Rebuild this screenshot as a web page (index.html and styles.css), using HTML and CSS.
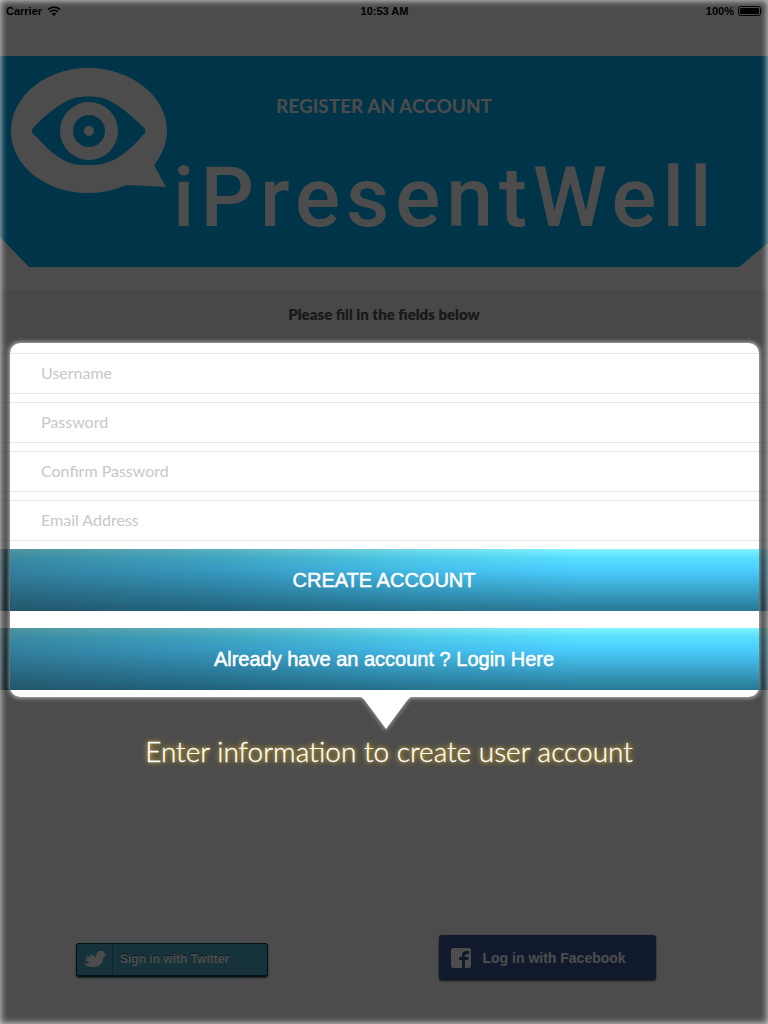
FILE: index.html
```html
<!DOCTYPE html>
<html lang="en">
<head>
<meta charset="utf-8">
<meta name="viewport" content="width=device-width, initial-scale=1">
<title>iPresentWell – Register an account</title>
<link rel="stylesheet" href="styles.css">
</head>
<body>
<div class="page">
  <div class="status">
    <div class="status-left">
      <span>Carrier</span>
      <svg class="wifi" viewBox="0 0 14 10" aria-hidden="true">
        <path d="M1 3.600C4.400.2 9.600.2 13 3.600M3.200 5.900C5.400 3.700 8.600 3.700 10.800 5.900" fill="none" stroke="#000" stroke-width="1.700"/>
        <path d="M7 10 4.700 7.700C6 6.500 8 6.500 9.300 7.700Z"/>
      </svg>
    </div>
    <span>10:53 AM</span>
    <div class="status-right">
      <span>100%</span>
      <svg class="battery" viewBox="0 0 25 10" aria-hidden="true">
        <rect x=".5" y=".5" width="22" height="9" rx="2" fill="none" stroke="#000"/>
        <rect x="2" y="2" width="19" height="6" rx="1"/>
        <path d="M23.500 3.200Q25 5 23.500 6.800Z"/>
      </svg>
    </div>
  </div>

  <header class="banner">
    <h1 class="title">REGISTER AN ACCOUNT</h1>
    <svg class="eye" viewBox="0 0 158 128" role="img" aria-label="Eye in a speech bubble">
      <path fill="#fff" fill-rule="evenodd" d="M78 1C36 1 1 29 1 64s35 62 77 62c14 0 27-3 38-8l40 2-12-22c8-10 13-22 13-34C157 29 121 1 78 1ZM23 61C36 47 50 36 64 31c9-2 20-2 29 0 14 5 27 16 40 29 3 1 3 6 0 8C121 82 109 92 96 96c-10 3-26 3-36 0C47 91 36 81 26 69c-4-1-5-5-3-8Z"/>
      <circle cx="79" cy="64" r="29" fill="#fff"/>
      <circle cx="79" cy="64" r="16" fill="#00adf3"/>
      <circle cx="79" cy="64" r="5" fill="#fff"/>
    </svg>
    <span class="brand">iPresentWell</span>
  </header>

  <main>
    <p class="hint">Please fill in the fields below</p>
    <form class="form">
      <div class="fields">
        <input class="field" type="text" placeholder="Username" aria-label="Username">
        <input class="field" type="password" placeholder="Password" aria-label="Password">
        <input class="field" type="password" placeholder="Confirm Password" aria-label="Confirm Password">
        <input class="field" type="email" placeholder="Email Address" aria-label="Email Address">
      </div>
      <div class="actions">
        <button class="action" type="submit">CREATE ACCOUNT</button>
        <button class="action" type="button">Already have an account ? Login Here</button>
      </div>
      <div class="spotlight"></div>
    </form>
    <div class="tip">
      <svg class="pointer" viewBox="0 0 50 34" aria-hidden="true"><path d="M0 0H50Q47 2 45 5L25 32 5 5Q3 2 0 0Z" fill="#fff"/></svg>
      <p class="tip-text">Enter information to create user account</p>
    </div>
  </main>

  <footer class="social">
    <button class="twitter" type="button">
      <span class="bird-box">
        <svg class="bird" viewBox="0 0 22 18" aria-hidden="true"><path fill="#fff" d="M0 13c2 1 5 1 6-1-2 0-4-1-5-3h3C2 8 2 7 3 6l4 1C6 6 6 5 6 4l6 3c0-3 1-5 3-6l2-1-1 1 3 0c1 1 1 2 2 3l1 1-2 1 1 1-2 1c0 5-4 9-9 9-5 0-9-1-10-4Z"/></svg>
      </span>
      <span class="twitter-label">Sign in with Twitter</span>
    </button>
    <button class="facebook" type="button">
      <svg class="fb" viewBox="0 0 20 20" aria-hidden="true"><rect width="20" height="20" rx="2" fill="#fff"/><path fill="#3b5998" d="M11 20V12H8V9h3V7c0-3 2-4 4-4h3v3h-2c-1 0-2 0-2 1v2h4l-1 3h-3v8Z"/></svg>
      <span>Log in with Facebook</span>
    </button>
  </footer>
  <div class="edge"></div>
</div>
</body>
</html>
```
FILE: styles.css
```css
* { box-sizing: border-box; }
body { margin: 0; font-family: Lato, "Open Sans", sans-serif; }
.page {
  position: relative;
  display: flex;
  flex-direction: column;
  min-height: 100vh;
  overflow: hidden;
  background: #fff;
}
h1, p { margin: 0; }
button { border: 0; padding: 0; cursor: pointer; }

.status {
  display: grid;
  grid-template-columns: 1fr auto 1fr;
  height: 56px;
  padding: 4px 5px 0 6px;
  font: 700 11px/14px "Liberation Sans", Arial, sans-serif;
  color: #000;
}
.status-left, .status-right { display: flex; gap: 5px; align-items: center; height: 14px; }
.status-right { justify-content: flex-end; gap: 4px; }
.wifi { width: 14px; height: 10px; }
.battery { width: 25px; height: 10px; }

.banner {
  position: relative;
  display: flex;
  align-items: flex-start;
  height: 211px;
  padding: 11px 10px 0;
  background: #00adf3;
  clip-path: polygon(0 0, 100% 0, 100% 187px, calc(100% - 29px) 100%, 29px 100%, 0 181px);
}
.title {
  position: absolute;
  top: 38px;
  left: 0;
  right: 0;
  text-align: center;
  font-size: 19px;
  line-height: 24px;
  font-weight: 700;
  color: #fff;
}
.eye { flex: none; width: 158px; height: 128px; }
.brand {
  padding: 81px 0 0 5px;
  font: 500 84px/100px Roboto, sans-serif;
  letter-spacing: 6px;
  color: #fff;
}

.hint {
  margin-top: 23px;
  height: 53px;
  padding-top: 14px;
  background: #f0f0f0;
  text-align: center;
  font-size: 15px;
  line-height: 20px;
  font-weight: 800;
  color: #555;
}
.form { position: relative; padding-bottom: 7px; }
.fields { display: grid; gap: 8px; padding: 10px 0 8px; }
.field {
  width: 100%;
  height: 41px;
  padding: 0 41px 3px;
  border: solid #e6e6e8;
  border-width: 1px 0;
  border-radius: 0;
  background: #fff;
  font: 16px/20px Lato, sans-serif;
  color: #333;
}
.field::placeholder { color: #c7c7cc; opacity: 1; }
.actions { display: grid; gap: 17px; }
.action {
  height: 62px;
  background:
    linear-gradient(100deg, rgba(28, 50, 62, 0.5) 0, rgba(20, 58, 78, 0.36) 28%, rgba(16, 60, 80, 0.12) 54%, rgba(16, 60, 80, 0) 75%),
    linear-gradient(#84f4ff 0, #58e0ff 14%, #4bceff 34%, #287894 100%);
  font: 20px/24px "Liberation Sans", Arial, sans-serif;
  -webkit-text-stroke: 0.5px #fff;
  color: #fff;
}
.spotlight {
  position: absolute;
  inset: 0 9px 0 10px;
  border-radius: 10px;
  box-shadow: 0 0 4px 1px rgba(255, 255, 255, 0.6), 0 0 0 2000px rgba(0, 0, 0, 0.7);
  pointer-events: none;
}
.tip { position: relative; display: grid; justify-items: center; }
.pointer { width: 50px; height: 34px; margin-right: -3px; filter: drop-shadow(0 2px 2px rgba(255, 255, 255, 0.4)); }
.tip-text {
  padding-left: 10px;
  font-size: 28px;
  line-height: 40px;
  font-weight: 300;
  text-align: center;
  color: #fff;
  -webkit-text-stroke: 0.3px #fff;
  text-shadow: 0 0 4px #d8b030, 0 0 6px #c09a20;
}

.social {
  display: grid;
  grid-template-columns: 1fr 1fr;
  align-items: center;
  margin-top: auto;
  padding: 0 56px 44px 20px;
}
.social > * { justify-self: center; }
.twitter {
  display: flex;
  align-items: center;
  width: 192px;
  height: 34px;
  margin: 4px 42px 0 0;
  border: 1px solid #064058;
  border-bottom-width: 2px;
  border-radius: 3px;
  background: #4aa8c6;
  box-shadow: 0 1px 2px #555;
  font: 700 12px/16px "Liberation Sans", Arial, sans-serif;
  color: #fff;
  text-shadow: 0 -1px 0 #24586a;
}
.bird-box { display: grid; place-items: center; width: 36px; height: 100%; border-right: 1px solid #287c98; }
.bird { width: 22px; height: 18px; }
.twitter-label { padding-left: 7px; }
.facebook {
  display: flex;
  align-items: center;
  gap: 12px;
  width: 217px;
  height: 45px;
  margin-left: 16px;
  padding-left: 12px;
  border-radius: 3px;
  background: #3b5998;
  box-shadow: 0 1px 2px #444;
  font: 700 14px/20px "Liberation Sans", Arial, sans-serif;
  color: #fff;
}
.fb { width: 20px; height: 20px; }
.edge {
  position: absolute;
  inset: 0;
  box-shadow: inset 0 0 6px 1px rgba(255, 255, 255, 0.7);
  pointer-events: none;
}
```
